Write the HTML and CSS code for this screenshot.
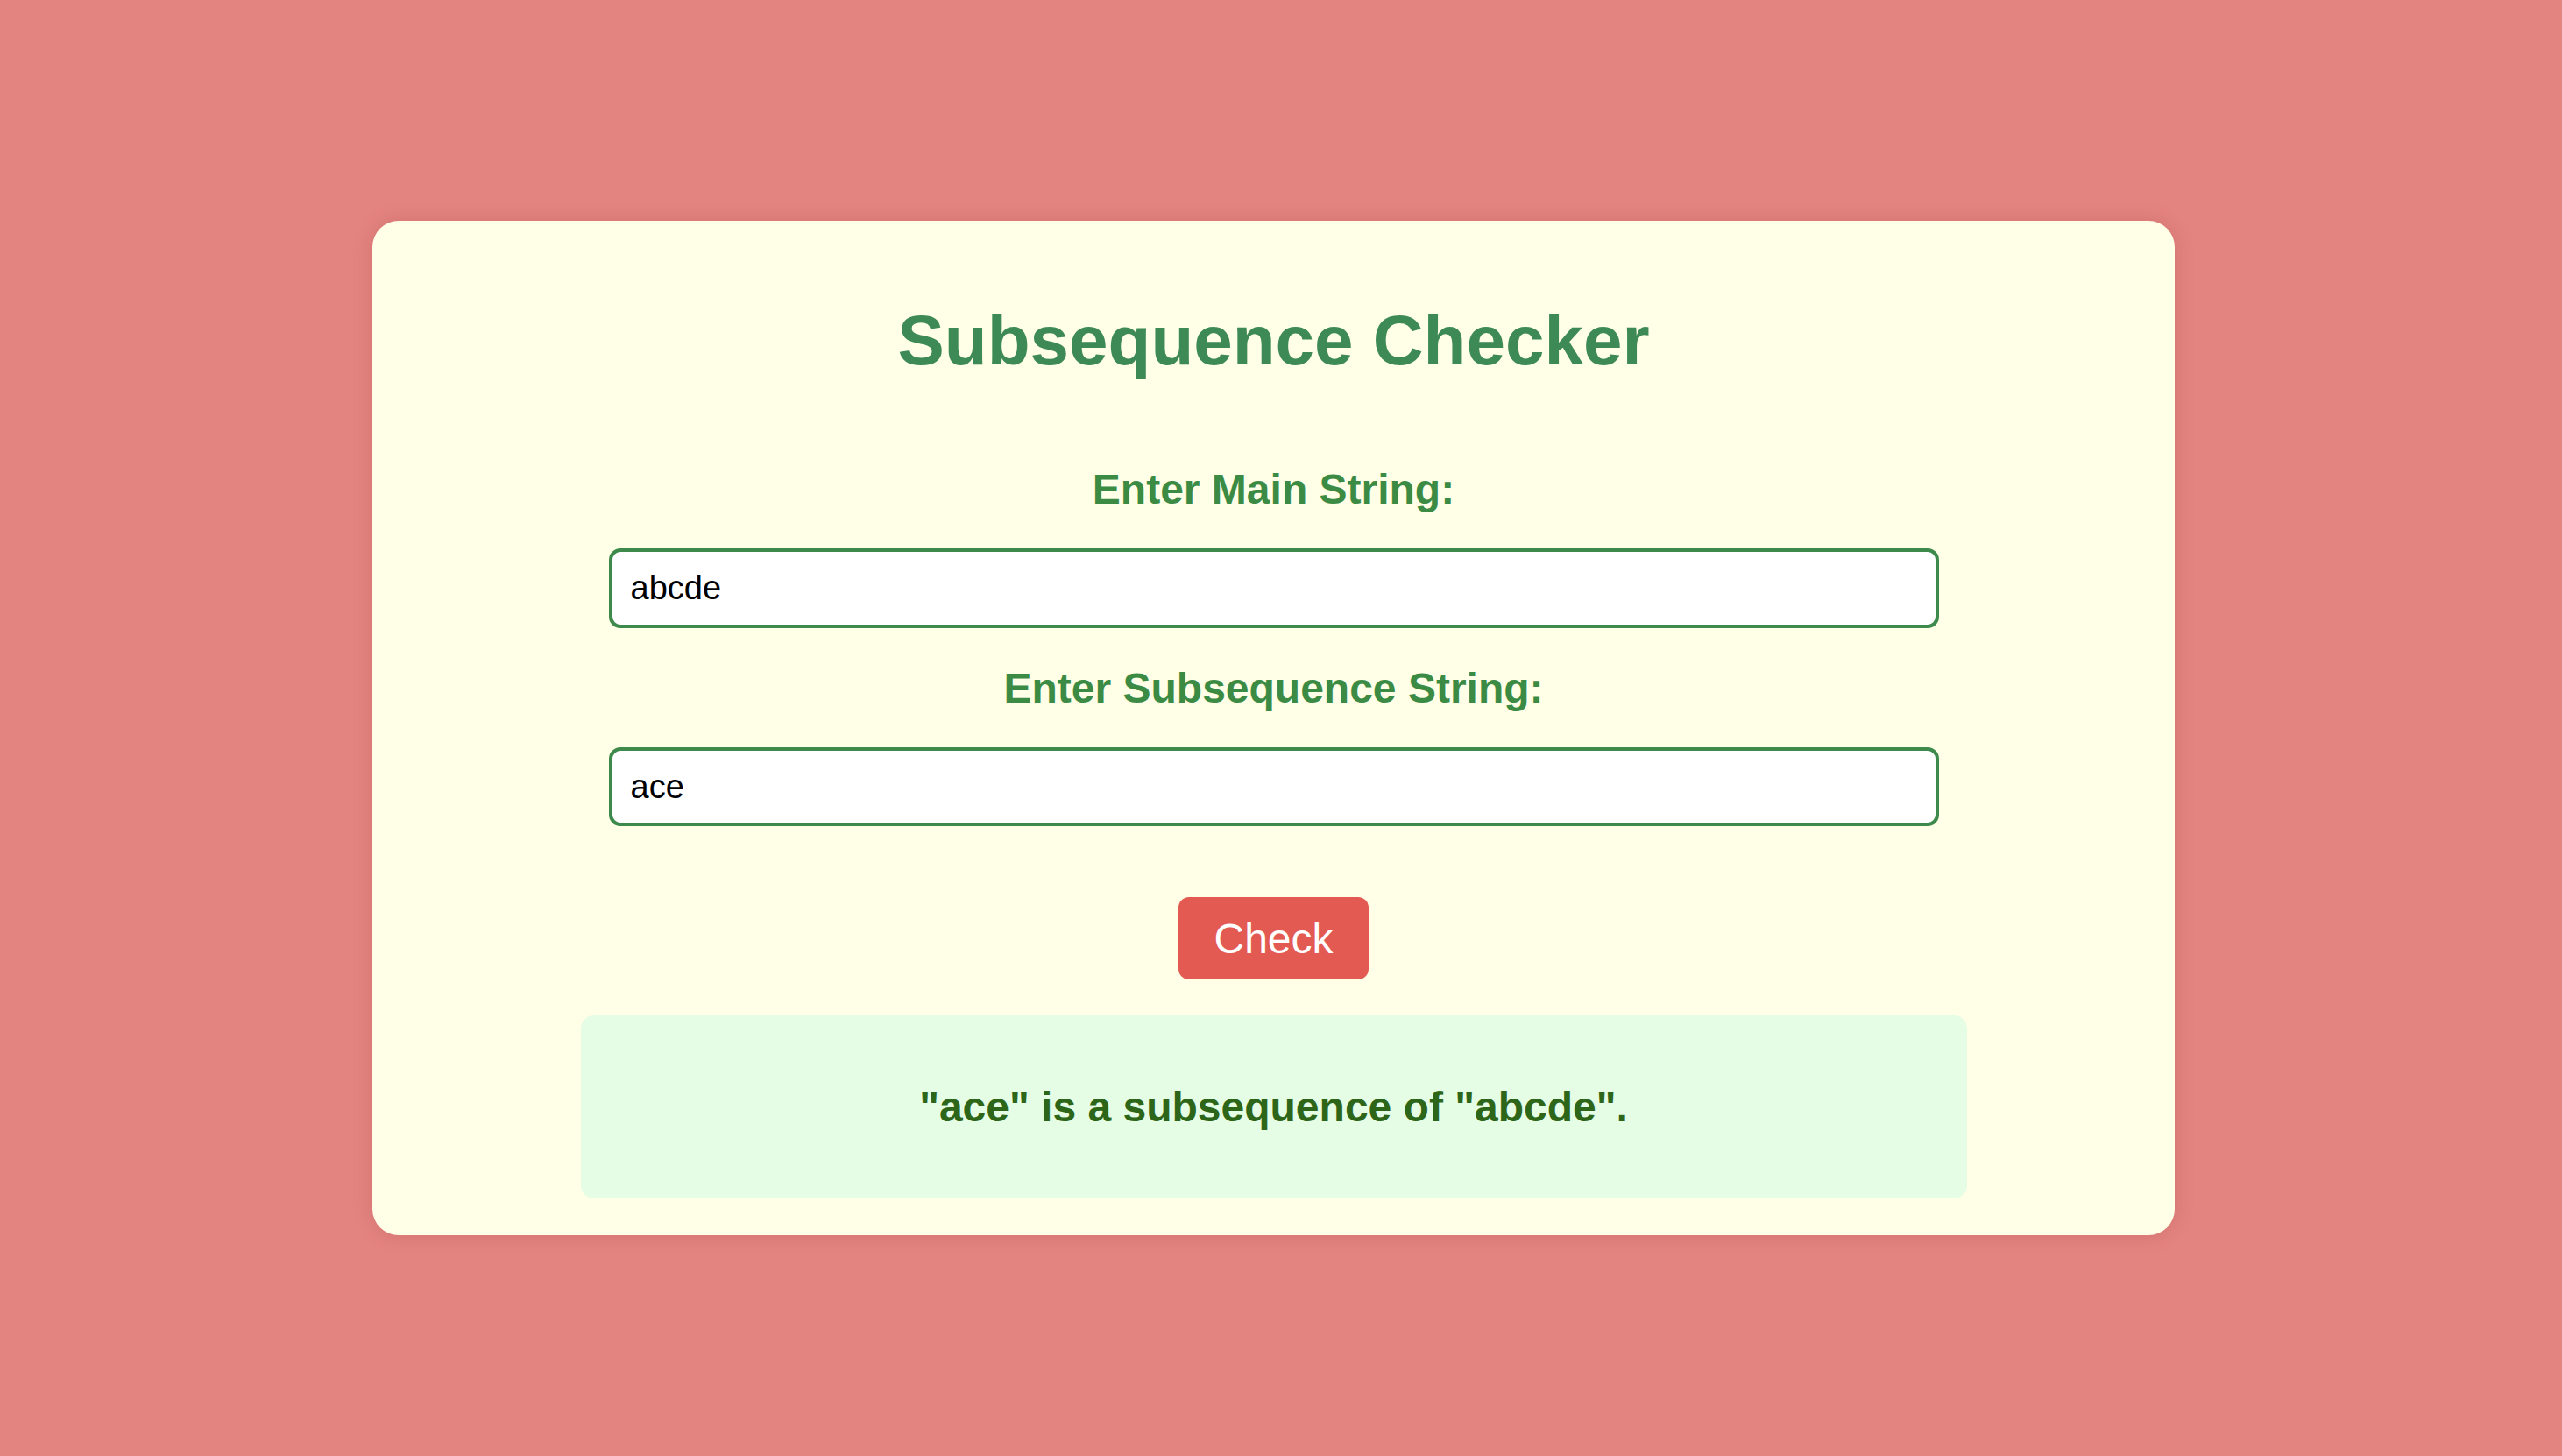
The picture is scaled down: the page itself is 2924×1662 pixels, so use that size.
FILE: index.html
```html
<!DOCTYPE html>
<html lang="en">
<head>
<meta charset="utf-8">
<title>Subsequence Checker</title>
<link rel="stylesheet" href="styles.css">
</head>
<body>
  <main class="card">
    <h1 class="title">Subsequence Checker</h1>
    <label class="label" for="main">Enter Main String:</label>
    <input class="field" id="main" type="text" value="abcde">
    <label class="label" for="sub">Enter Subsequence String:</label>
    <input class="field" id="sub" type="text" value="ace">
    <button class="check" type="button">Check</button>
    <div class="result">"ace" is a subsequence of "abcde".</div>
  </main>
</body>
</html>
```

FILE: styles.css
```css
* {
  box-sizing: border-box;
}

html, body {
  margin: 0;
  padding: 0;
}

body {
  min-height: 100vh;
  background: #e48480;
  font-family: "Liberation Sans", Arial, Helvetica, sans-serif;
  display: flex;
  align-items: center;
  justify-content: center;
  padding-right: 17px;
}

.card {
  width: 2057px;
  background: #fffee6;
  border-radius: 30px;
  box-shadow: 0 0 22px rgba(120, 40, 40, 0.18);
  padding: 40px 40px 42px;
  display: flex;
  flex-direction: column;
  align-items: center;
}

.title {
  margin: 51px 0 96px;
  font-size: 80px;
  font-weight: 700;
  line-height: normal;
  color: #3e8a57;
}

.label {
  display: block;
  font-size: 48px;
  font-weight: 700;
  line-height: normal;
  color: #3b8b45;
  margin-bottom: 40px;
}

.field {
  display: block;
  width: 1518px;
  height: 91px;
  border: 4.5px solid #3e8a4c;
  border-radius: 13px;
  background: #ffffff;
  padding: 0 21px;
  font-family: "Liberation Sans", Arial, Helvetica, sans-serif;
  font-size: 38px;
  color: #000000;
  outline: none;
  margin: 0 0 41px;
}

#sub {
  height: 90px;
  margin-bottom: 81px;
}

.check {
  height: 94px;
  padding: 0 40px;
  border: none;
  border-radius: 12px;
  background: #e35a53;
  color: #ffffff;
  font-family: "Liberation Sans", Arial, Helvetica, sans-serif;
  font-size: 48px;
  line-height: normal;
  margin-bottom: 41px;
  cursor: pointer;
}

.result {
  width: 1582px;
  padding: 77px 0;
  background: #e5fde5;
  border-radius: 15px;
  text-align: center;
  font-size: 48px;
  font-weight: 700;
  line-height: normal;
  color: #2d6619;
}
```
